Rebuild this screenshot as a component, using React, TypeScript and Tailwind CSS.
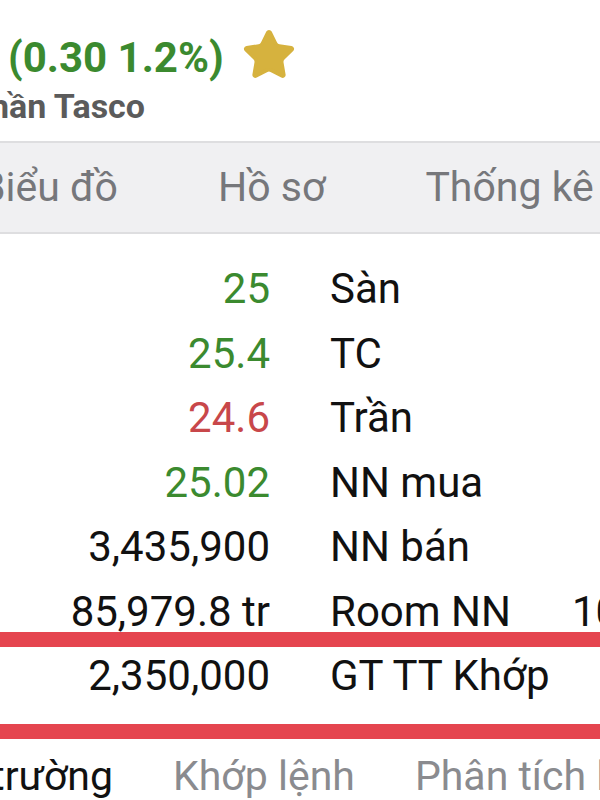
import { Star } from 'lucide-react';

type Row = { value: string; label: string; tone: 'up' | 'down' | 'plain'; extra?: string };

const rows: Row[] = [
  { value: '25', label: 'Sàn', tone: 'up' },
  { value: '25.4', label: 'TC', tone: 'up' },
  { value: '24.6', label: 'Trần', tone: 'down' },
  { value: '25.02', label: 'NN mua', tone: 'up' },
  { value: '3,435,900', label: 'NN bán', tone: 'plain' },
  { value: '85,979.8 tr', label: 'Room NN', tone: 'plain', extra: '100' },
];

const toneClass = {
  up: 'text-[#3b8a2f]',
  down: 'text-[#c8474a]',
  plain: 'text-[#111111]',
};

function DataRow({ row }: { row: Row }) {
  return (
    <div className="flex h-[64.5px] items-center whitespace-nowrap">
      <div className={`w-[270px] shrink-0 text-right ${toneClass[row.tone]}`}>{row.value}</div>
      <div className="ml-[60px] w-[242px] shrink-0 text-[#111111]">{row.label}</div>
      {row.extra && <div className="text-[#111111]">{row.extra}</div>}
    </div>
  );
}

export default function App() {
  return (
    <div className="h-[800px] w-[600px] overflow-hidden bg-white font-['Roboto',sans-serif]">
      {/* Header */}
      <div className="pt-[30px]">
        <div className="flex items-center pl-[8px]">
          <span className="text-[42px] font-bold leading-[56px] text-[#3b8a2f]">(0.30 1.2%)</span>
          <Star className="-mt-[6px] ml-[17px] h-[56px] w-[56px]" fill="#d6b23e" stroke="#d6b23e" strokeWidth={1.5} />
        </div>
        <div className="flex h-[40px] items-center">
          <span className="flex w-[145px] shrink-0 justify-end whitespace-nowrap text-[34px] font-bold text-[#5b5b5b]">
            phần Tasco
          </span>
        </div>
      </div>

      {/* Top tabs */}
      <div className="mt-[15px] flex h-[93px] items-center gap-[100px] whitespace-nowrap border-y-2 border-[#dedee0] bg-[#f0f0f2] text-[41px] text-[#76777b]">
        <span className="flex w-[118px] shrink-0 justify-end">Biểu đồ</span>
        <span>Hồ sơ</span>
        <span>Thống kê</span>
      </div>

      {/* Data rows */}
      <div className="mt-[23px] text-[42px] leading-none">
        {rows.map((r) => (
          <DataRow key={r.label} row={r} />
        ))}
        <div className="relative">
          <div className="absolute -top-[12px] left-0 h-[15px] w-full bg-[#e5454f]" />
          <DataRow row={{ value: '2,350,000', label: 'GT TT Khớp', tone: 'plain' }} />
          <div className="absolute -bottom-[30px] left-0 h-[15px] w-full bg-[#e5454f]" />
        </div>
      </div>

      {/* Bottom tabs */}
      <div className="mt-[39px] flex items-center gap-[60px] whitespace-nowrap text-[41px] leading-[56px] text-[#8a8b8f]">
        <span className="flex w-[113px] shrink-0 justify-end text-[#111111]">Thị trường</span>
        <span>Khớp lệnh</span>
        <span>Phân tích lệnh</span>
      </div>
    </div>
  );
}
